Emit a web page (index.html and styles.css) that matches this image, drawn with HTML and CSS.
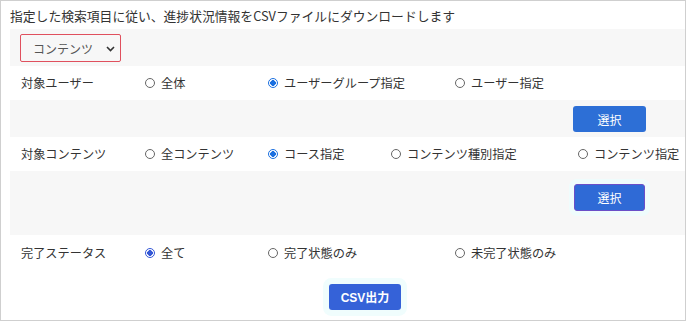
FILE: index.html
```html
<!DOCTYPE html>
<html lang="ja">
<head>
    <meta charset="UTF-8">
    <meta name="viewport" content="width=device-width, initial-scale=1.0">
    <title>進捗状況CSVダウンロード</title>
    <link rel="stylesheet" href="styles.css">
</head>
<body>
    <div class="frame">
        <p class="lead">指定した検索項目に従い、進捗状況情報をCSVファイルにダウンロードします</p>

        <!-- 検索種別 -->
        <div class="band band-select">
            <div class="select-box">
                <span>コンテンツ</span>
                <svg class="chevron" width="9" height="6" viewBox="0 0 9 6"><path d="M1 1l3.5 3.5L8 1" fill="none" stroke="#333" stroke-width="1.6"/></svg>
            </div>
        </div>

        <!-- 対象ユーザー -->
        <div class="row">
            <span class="row-label">対象ユーザー</span>
            <label class="option short"><span class="radio"></span>全体</label>
            <label class="option long"><span class="radio checked"></span>ユーザーグループ指定</label>
            <label class="option"><span class="radio"></span>ユーザー指定</label>
        </div>
        <div class="band band-btn">
            <button class="btn">選択</button>
        </div>

        <!-- 対象コンテンツ -->
        <div class="row">
            <span class="row-label">対象コンテンツ</span>
            <label class="option short"><span class="radio"></span>全コンテンツ</label>
            <label class="option short"><span class="radio checked"></span>コース指定</label>
            <label class="option long"><span class="radio"></span>コンテンツ種別指定</label>
            <label class="option"><span class="radio"></span>コンテンツ指定</label>
        </div>
        <div class="band band-tall">
            <button class="btn btn-focus">選択</button>
        </div>

        <!-- 完了ステータス -->
        <div class="row row-status">
            <span class="row-label">完了ステータス</span>
            <label class="option short"><span class="radio checked alt"></span>全て</label>
            <label class="option long"><span class="radio"></span>完了状態のみ</label>
            <label class="option"><span class="radio"></span>未完了状態のみ</label>
        </div>

        <div class="footer">
            <button class="btn btn-csv">CSV出力</button>
        </div>
    </div>
</body>
</html>
```

FILE: styles.css
```css
* {
    box-sizing: border-box;
    margin: 0;
    padding: 0;
}

body {
    font-family: "Noto Sans CJK JP", "Noto Sans", sans-serif;
    color: #333;
    background-color: #fff;
    width: 686px;
    height: 321px;
    overflow: hidden;
}

.frame {
    width: 686px;
    height: 321px;
    border: 1px solid #cfcfcf;
    padding-left: 9px;
}

.lead {
    font-size: 12.8px;
    line-height: 17px;
    padding: 6px 0 5px 0;
    color: #333;
}

.band {
    background-color: #f7f7f7;
}

.band-select {
    height: 37px;
    padding: 5px 0 0 10px;
}

.select-box {
    width: 101px;
    height: 28px;
    border: 1.5px solid #e0505e;
    border-radius: 2px;
    background-color: #f7f7f7;
    display: flex;
    align-items: center;
    justify-content: space-between;
    padding: 0 5px 0 12px;
    font-size: 12px;
    color: #555;
}

.chevron {
    margin-top: 1px;
}

.row {
    height: 34px;
    display: flex;
    align-items: center;
    padding-left: 11px;
    font-size: 12.2px;
    background-color: #fff;
}

.row-status {
    height: 35px;
}

.row-label {
    width: 124px;
    flex-shrink: 0;
}

.option {
    display: flex;
    align-items: center;
    gap: 6px;
    white-space: nowrap;
}

.option.short {
    width: 123px;
}

.option.long {
    width: 187px;
}

.radio {
    width: 10px;
    height: 10px;
    border: 1px solid #666;
    border-radius: 50%;
    background-color: #fff;
    flex-shrink: 0;
}

.radio.checked {
    border: 1.5px solid #1a6fe0;
    background: radial-gradient(circle, #1a6fe0 0 2.6px, #fff 3px);
}

.radio.checked.alt {
    border-color: #3357d6;
    background: radial-gradient(circle, #3357d6 0 2.6px, #fff 3px);
}

.band-btn {
    height: 37px;
    display: flex;
    justify-content: flex-end;
    padding: 6px 39px 0 0;
}

.band-tall {
    height: 64px;
    display: flex;
    justify-content: flex-end;
    padding: 13px 40px 0 0;
}

.btn {
    width: 73px;
    height: 26px;
    border: none;
    border-radius: 3px;
    background-color: #2d6fd6;
    color: #fff;
    font-family: inherit;
    font-size: 12px;
}

.btn-focus {
    width: 71px;
    height: 27px;
    border: 1.5px solid #6a4fc8;
    background-color: #2f6ad6;
    box-shadow: 0 0 0 5px #effcfc;
}

.footer {
    padding: 13px 0 0 319px;
}

.btn-csv {
    width: 72px;
    background-color: #3562d8;
    font-weight: bold;
    font-family: "Liberation Sans", "Noto Sans CJK JP", sans-serif;
    box-shadow: 0 0 0 6px #f0fdfd;
}
```
